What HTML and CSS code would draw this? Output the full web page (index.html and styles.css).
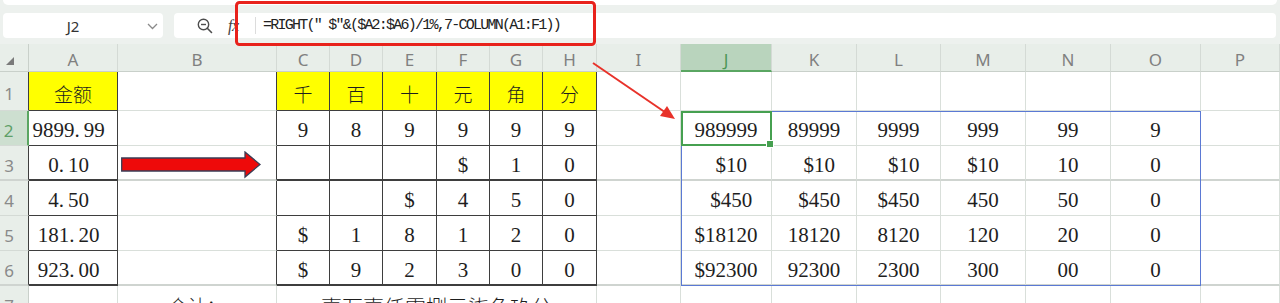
FILE: index.html
```html
<!DOCTYPE html>
<html lang="zh-CN">
<head>
<meta charset="utf-8">
<title>Sheet</title>
<link rel="stylesheet" href="styles.css">
</head>
<body>
<div class="top">
  <div class="topstrip"></div>
  <div class="toolbar">
    <div class="namebox">
      <span class="ref">J2</span>
      <svg class="chev" width="11" height="7" viewBox="0 0 11 7"><path d="M1 1 L5.5 5.5 L10 1" fill="none" stroke="#8a8a8a" stroke-width="1.3"/></svg>
    </div>
    <div class="formulabox">
      <svg class="zoomicon" width="16" height="16" viewBox="0 0 16 16"><circle cx="6.5" cy="6.5" r="5.2" fill="none" stroke="#4d4d4d" stroke-width="1.4"/><path d="M4 6.5 H9" stroke="#4d4d4d" stroke-width="1.4"/><path d="M10.3 10.3 L14.5 14.5" stroke="#4d4d4d" stroke-width="1.6" stroke-linecap="round"/></svg>
      <span class="fx">fx</span>
      <span class="sep"></span>
      <span class="formula">=RIGHT(" $"&amp;($A2:$A6)/1%,7-COLUMN(A1:F1))</span>
    </div>
  </div>
</div>

<div class="sheet">
  <div class="corner"><svg width="8" height="8" viewBox="0 0 8 8"><path d="M8 0 V8 H0 Z" fill="#7a7a7a"/></svg></div>
  <div class="ch">A</div><div class="ch">B</div><div class="ch">C</div><div class="ch">D</div><div class="ch">E</div><div class="ch">F</div><div class="ch">G</div><div class="ch">H</div><div class="ch">I</div><div class="ch sel">J</div><div class="ch">K</div><div class="ch">L</div><div class="ch">M</div><div class="ch">N</div><div class="ch">O</div><div class="ch">P</div>

  <!-- row 1 -->
  <div class="rh edge">1</div>
  <div class="c t y zh">金额</div>
  <div class="c edge"></div>
  <div class="c t y zh">千</div><div class="c t y zh">百</div><div class="c t y zh">十</div><div class="c t y zh">元</div><div class="c t y zh">角</div><div class="c t y zh">分</div>
  <div class="c"></div><div class="c"></div><div class="c"></div><div class="c"></div><div class="c"></div><div class="c"></div><div class="c"></div><div class="c"></div>

  <!-- row 2 -->
  <div class="rh rsel">2</div>
  <div class="c t amt">9899<span class="dot">.</span>99</div>
  <div class="c edge"></div>
  <div class="c t">9</div><div class="c t">8</div><div class="c t">9</div><div class="c t">9</div><div class="c t">9</div><div class="c t">9</div>
  <div class="c"></div>
  <div class="c">989999</div><div class="c">89999</div><div class="c">9999</div><div class="c">999</div><div class="c">99</div><div class="c">9</div>
  <div class="c"></div>

  <!-- row 3 -->
  <div class="rh edge thick">3</div>
  <div class="c t amt thick">0<span class="dot">.</span>10</div>
  <div class="c edge thick arrowcell"><svg width="141" height="28" viewBox="0 0 141 28"><polygon points="0.7,7 124,7 124,1 139,13.5 124,26 124,20 0.7,20" fill="#ee0a0a" stroke="#3b3d55" stroke-width="1.3" stroke-linejoin="miter"/></svg></div>
  <div class="c t thick"></div><div class="c t thick"></div><div class="c t thick"></div><div class="c t thick">$</div><div class="c t thick">1</div><div class="c t thick">0</div>
  <div class="c thick"></div>
  <div class="c thick">&ensp;$10</div><div class="c thick">&ensp;$10</div><div class="c thick">&ensp;$10</div><div class="c thick">$10</div><div class="c thick">10</div><div class="c thick">0</div>
  <div class="c thick"></div>

  <!-- row 4 -->
  <div class="rh edge">4</div>
  <div class="c t amt">4<span class="dot">.</span>50</div>
  <div class="c edge"></div>
  <div class="c t"></div><div class="c t"></div><div class="c t">$</div><div class="c t">4</div><div class="c t">5</div><div class="c t">0</div>
  <div class="c"></div>
  <div class="c">&ensp;$450</div><div class="c">&ensp;$450</div><div class="c">$450</div><div class="c">450</div><div class="c">50</div><div class="c">0</div>
  <div class="c"></div>

  <!-- row 5 -->
  <div class="rh edge">5</div>
  <div class="c t amt">181<span class="dot">.</span>20</div>
  <div class="c edge"></div>
  <div class="c t">$</div><div class="c t">1</div><div class="c t">8</div><div class="c t">1</div><div class="c t">2</div><div class="c t">0</div>
  <div class="c"></div>
  <div class="c">$18120</div><div class="c">18120</div><div class="c">8120</div><div class="c">120</div><div class="c">20</div><div class="c">0</div>
  <div class="c"></div>

  <!-- row 6 -->
  <div class="rh edge thick">6</div>
  <div class="c t amt thick">923<span class="dot">.</span>00</div>
  <div class="c edge thick"></div>
  <div class="c t thick">$</div><div class="c t thick">9</div><div class="c t thick">2</div><div class="c t thick">3</div><div class="c t thick">0</div><div class="c t thick">0</div>
  <div class="c thick"></div>
  <div class="c thick">$92300</div><div class="c thick">92300</div><div class="c thick">2300</div><div class="c thick">300</div><div class="c thick">00</div><div class="c thick">0</div>
  <div class="c thick"></div>

  <!-- row 7 -->
  <div class="rh">7</div>
  <div class="c"></div>
  <div class="c zh">合计：</div>
  <div class="c zh merged">壹万壹仟零捌元柒角玖分</div>
  <div class="c"></div><div class="c"></div><div class="c"></div><div class="c"></div><div class="c"></div><div class="c"></div><div class="c"></div><div class="c"></div>

  <div class="overlay">
    <div class="range"></div>
    <div class="active"></div>
  </div>
</div>

<svg class="annot" width="1280" height="303" viewBox="0 0 1280 303">
  <rect x="236.5" y="2.5" width="358" height="42" rx="3" fill="none" stroke="#e8221c" stroke-width="3"/>
  <line x1="593" y1="63" x2="664" y2="111.5" stroke="#e8322a" stroke-width="2"/>
  <polygon points="675,119 660,116 667,106" fill="#e8322a"/>
</svg>
</body>
</html>
```

FILE: styles.css
```css
* { box-sizing: border-box; }

body {
  margin: 0;
  width: 1280px;
  height: 303px;
  overflow: hidden;
  background: #fff;
  position: relative;
  font-family: "Noto Sans", "Noto Sans CJK SC", sans-serif;
}

/* ---------- toolbar ---------- */
.top {
  height: 44px;
  background: #edf1ee;
}
.topstrip {
  height: 5px;
  margin: 0 3px;
  background: #fff;
  border-radius: 0 0 5px 5px;
}
.toolbar {
  display: flex;
  gap: 11px;
  padding: 8px 4px 0 3px;
}
.namebox {
  width: 160px;
  height: 25px;
  background: #fff;
  border-radius: 4px;
  display: flex;
  align-items: center;
}
.ref {
  flex: 0 0 140px;
  text-align: center;
  font-size: 15px;
  color: #333;
}
.chev { margin-left: 4px; margin-top: 1px; }

.formulabox {
  flex: 1;
  height: 25px;
  background: #fff;
  border-radius: 4px;
  display: flex;
  align-items: center;
  padding-left: 23px;
}
.zoomicon { flex: none; margin-top: 1px; }
.fx {
  width: 16px;
  margin-left: 15px;
  font-family: "Liberation Serif", serif;
  font-style: italic;
  font-size: 16px;
  color: #444;
  letter-spacing: -0.5px;
}
.sep {
  width: 1px;
  height: 17px;
  margin-left: 11px;
  background: #dcdcdc;
}
.formula {
  margin-left: 7px;
  font-family: "Liberation Mono", monospace;
  font-size: 15px;
  letter-spacing: -1.76px;
  color: #222;
  white-space: pre;
}

/* ---------- sheet grid ---------- */
.sheet,
.overlay {
  display: grid;
  grid-template-columns: 29px 89px 159px 53px 53px 54px 53px 53px 54px 84px 91px 85px 84px 85px 85px 90px 79px;
  grid-template-rows: 28px 39px repeat(6, 35px);
}
.sheet { position: relative; }
.overlay {
  position: absolute;
  inset: 0;
  pointer-events: none;
}

.corner {
  background: #e8eee9;
  border-right: 1px solid #c9d0ca;
  border-bottom: 1px solid #c9d0ca;
  padding: 13px 0 0 6px;
}
.corner svg { display: block; }

.ch {
  background: #e8eee9;
  border-right: 1px solid #d4dad5;
  border-bottom: 1px solid #c9d0ca;
  color: #808080;
  font-size: 17px;
  display: flex;
  align-items: center;
  justify-content: center;
  padding-top: 4px;
}
.ch.sel {
  background: #b9d4bd;
  color: #4c9656;
  border-bottom: 2px solid #5aa662;
}

.rh {
  background: #e8eee9;
  border-right: 1px solid #c9d0ca;
  border-bottom: 1px solid #d4dad5;
  color: #8a8a8a;
  font-size: 17px;
  display: flex;
  align-items: center;
  justify-content: center;
  padding: 5px 10px 0 0;
}
.rh.rsel {
  background: #cddfd0;
  color: #5f9f68;
  border-right: 2px solid #5aa662;
}

.c {
  border-right: 1px solid #d9dfda;
  border-bottom: 1px solid #d9dfda;
  display: flex;
  align-items: center;
  justify-content: center;
  padding-top: 5px;
  font-family: "Liberation Serif", "Noto Sans CJK SC", serif;
  font-size: 21px;
  color: #1e1e1e;
  white-space: pre;
  overflow: hidden;
}
.c.t {
  border-right-color: #3e3e3e;
  border-bottom-color: #3e3e3e;
}
.edge { border-right-color: #3e3e3e !important; }
.y { background: #ffff00; }
.thick { border-bottom-width: 2px !important; }
.rh.thick, .c.thick:not(.t) { border-bottom-color: #cfd4d0; }

.zh {
  font-family: "Noto Sans CJK SC", sans-serif;
  font-weight: 300;
  font-size: 19px;
}
.amt { padding-right: 9px; }
.dot { margin-right: 4px; }

.arrowcell {
  justify-content: flex-start;
  align-items: flex-start;
  padding: 5px 0 0 3px;
}
.arrowcell svg { display: block; }

.merged {
  grid-column: span 6;
  font-size: 21px;
}

/* ---------- selection overlay ---------- */
.range {
  grid-column: 11 / 17;
  grid-row: 3 / 8;
  border: 1px solid #5b79d4;
}
.active {
  grid-column: 11 / 12;
  grid-row: 3 / 4;
  border: 2px solid #46a050;
  position: relative;
}
.active::after {
  content: "";
  position: absolute;
  right: -4px;
  bottom: -4px;
  width: 6px;
  height: 6px;
  background: #46a050;
  border: 1px solid #fff;
}

/* ---------- annotations ---------- */
.annot {
  position: absolute;
  left: 0;
  top: 0;
  pointer-events: none;
}
```
